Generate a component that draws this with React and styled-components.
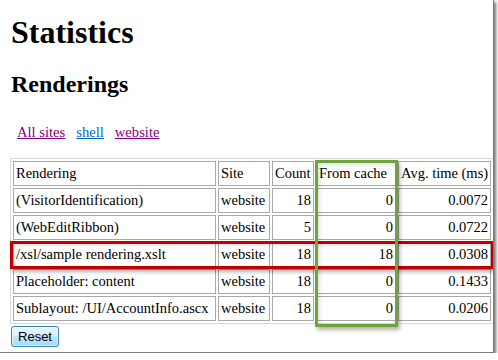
import React from "react";
import styled, { createGlobalStyle } from "styled-components";

const Global = createGlobalStyle`
  html, body { margin: 0; padding: 0; background: #fff; }
  body { font-family: "Liberation Serif", "Times New Roman", serif; color: #000; }
`;

const Frame = styled.div`
  box-sizing: border-box;
  width: 494px;
  height: 353px;
  padding-left: 10px;
  background: #fff;
  border-right: 1px solid #7a7a7a;
  border-bottom: 1px solid #7a7a7a;
  box-shadow: 2px 2px 3px rgba(0, 0, 0, 0.55);
  overflow: hidden;
  display: flex;
  flex-direction: column;
  align-items: flex-start;
`;

const Title = styled.h1`
  margin: 14px 0 0 1px;
  font-size: 32px;
  line-height: 36px;
  font-weight: bold;
`;

const Subtitle = styled.h2`
  margin: 20px 0 0 1px;
  font-size: 24px;
  line-height: 28px;
  font-weight: bold;
`;

const SiteLinks = styled.div`
  margin: 25px 0 0 7px;
  display: flex;
  gap: 11px;
  font-family: "Liberation Serif", "Times New Roman", serif;
  font-size: 14.6px;
  line-height: 18px;
`;

const SiteLink = styled.a`
  color: ${(p) => (p.$visited ? "#800080" : "#0066cc")};
  text-decoration: underline;
  cursor: pointer;
`;

const TableWrap = styled.div`
  position: relative;
  margin-top: 17px;
`;

const Table = styled.table`
  table-layout: fixed;
  width: 484px;
  border-collapse: separate;
  border-spacing: 2px;
  border: 1px solid #d8d8d8;
  font-family: "Liberation Serif", "Times New Roman", serif;
  font-size: 14.5px;
`;

const Cell = styled.td`
  border: 1px solid #a9a9a9;
  padding: 2px 2px;
  line-height: 19px;
  white-space: nowrap;
  overflow: hidden;
  text-align: ${(p) => (p.$num ? "right" : "left")};
`;

const HeadCell = styled(Cell)`
  width: ${(p) => p.$w}px;
`;

const Highlight = styled.div`
  position: absolute;
  box-sizing: border-box;
  border: 3px solid ${(p) => p.$color};
  box-shadow: 2px 3px 4px rgba(0, 0, 0, 0.3), inset 2px 2px 4px rgba(0, 0, 0, 0.12);
  pointer-events: none;
`;

const ResetButton = styled.button`
  margin: 2px 0 0 1px;
  box-sizing: border-box;
  width: 48px;
  height: 21px;
  padding: 0;
  border: 1px solid #3c7fb1;
  border-radius: 3px;
  background: linear-gradient(#eaf6fd 0%, #d9f0fc 45%, #bee6fd 50%, #a7d9f5 100%);
  box-shadow: inset 0 0 0 1px rgba(255, 255, 255, 0.7);
  font-family: "Liberation Sans", Arial, sans-serif;
  font-size: 13px;
  color: #000;
`;

const rows = [
  ["(VisitorIdentification)", "website", "18", "0", "0.0072"],
  ["(WebEditRibbon)", "website", "5", "0", "0.0722"],
  ["/xsl/sample rendering.xslt", "website", "18", "18", "0.0308"],
  ["Placeholder: content", "website", "18", "0", "0.1433"],
  ["Sublayout: /UI/AccountInfo.ascx", "website", "18", "0", "0.0206"],
];

const cols = [
  { label: "Rendering", w: 197 },
  { label: "Site", w: 46 },
  { label: "Count", w: 36 },
  { label: "From cache", w: 74 },
  { label: "Avg. time (ms)", w: 87 },
];

export default function App() {
  return (
    <>
      <Global />
      <Frame>
        <Title>Statistics</Title>
        <Subtitle>Renderings</Subtitle>
        <SiteLinks>
          <SiteLink $visited>All sites</SiteLink>
          <SiteLink>shell</SiteLink>
          <SiteLink $visited>website</SiteLink>
        </SiteLinks>
        <TableWrap>
          <Table>
            <tbody>
              <tr>
                {cols.map((c) => (
                  <HeadCell key={c.label} $w={c.w}>
                    {c.label}
                  </HeadCell>
                ))}
              </tr>
              {rows.map((r) => (
                <tr key={r[0]}>
                  <Cell>{r[0]}</Cell>
                  <Cell>{r[1]}</Cell>
                  <Cell $num>{r[2]}</Cell>
                  <Cell $num>{r[3]}</Cell>
                  <Cell $num>{r[4]}</Cell>
                </tr>
              ))}
            </tbody>
          </Table>
          <Highlight $color="#c00000" style={{ left: 0, top: 83, width: 484, height: 28 }} />
          <Highlight $color="#6ea539" style={{ left: 305, top: 2, width: 83, height: 167 }} />
        </TableWrap>
        <ResetButton>Reset</ResetButton>
      </Frame>
    </>
  );
}
